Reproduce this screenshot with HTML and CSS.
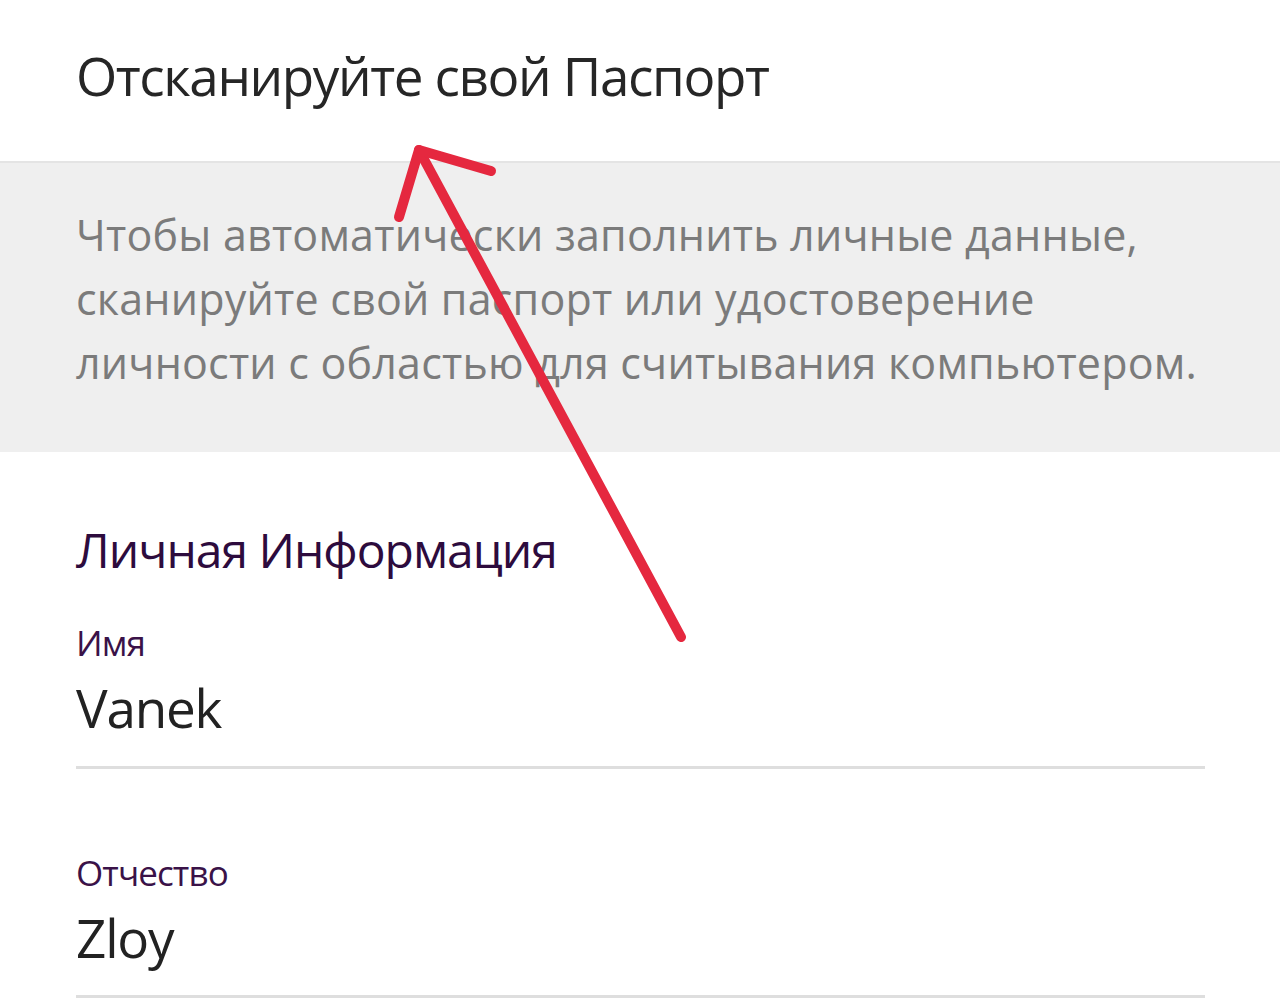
FILE: index.html
```html
<!DOCTYPE html>
<html lang="ru">
<head>
<meta charset="utf-8">
<link rel="stylesheet" href="styles.css">
</head>
<body>
<div class="screen">
  <header class="topbar">
    <h1 class="title">Отсканируйте свой Паспорт</h1>
  </header>
  <section class="notice">
    <p>Чтобы автоматически заполнить личные данные,<br>сканируйте свой паспорт или удостоверение<br>личности с областью для считывания компьютером.</p>
  </section>
  <section class="form">
    <h2 class="section-title">Личная Информация</h2>
    <div class="field">
      <div class="label">Имя</div>
      <div class="value">Vanek</div>
    </div>
    <div class="field">
      <div class="label">Отчество</div>
      <div class="value">Zloy</div>
    </div>
  </section>
  <svg class="arrow" width="1280" height="1008" viewBox="0 0 1280 1008">
    <g fill="none" stroke="#e5283f" stroke-width="10" stroke-linecap="round" stroke-linejoin="round">
      <path d="M681 637 L419 150"/>
      <path d="M399 217 L419 150 L491 171"/>
    </g>
  </svg>
</div>
</body>
</html>
```
FILE: styles.css
```css
* { box-sizing: border-box; }
html, body { margin: 0; padding: 0; background: #fff; }
body { font-family: "Open Sans", "Noto Sans", sans-serif; }
.screen { position: relative; width: 1280px; height: 1008px; overflow: hidden; background: #fff; }
.topbar { height: 163px; padding: 42px 0 0 76px; border-bottom: 2px solid #e4e4e4; }
.title { margin: 0; font-weight: 400; font-size: 53px; line-height: 68px; color: #262626; letter-spacing: -1.4px; }
.notice { background: #efefef; height: 289px; padding: 0 40px 0 76px; }
.notice p { margin: 0; padding-top: 40px; font-size: 43px; line-height: 64px; color: #7b7b7b; letter-spacing: 0.2px; white-space: nowrap; }
.form { padding: 66px 75px 0 76px; }
.section-title { margin: 0; font-weight: 400; font-size: 48px; line-height: 64px; color: #2d0b3d; letter-spacing: -1px; }
.field { border-bottom: 3px solid #dedede; }
.label { margin-top: 39px; font-size: 35px; line-height: 44px; color: #3a1248; letter-spacing: -0.9px; }
.value { margin-top: 11px; font-size: 53px; line-height: 64px; color: #222; padding-bottom: 26px; letter-spacing: -1.2px; }
.field + .field { margin-top: 82px; }
.field + .field .value { padding-bottom: 25px; }
.arrow { position: absolute; left: 0; top: 0; pointer-events: none; }
```
